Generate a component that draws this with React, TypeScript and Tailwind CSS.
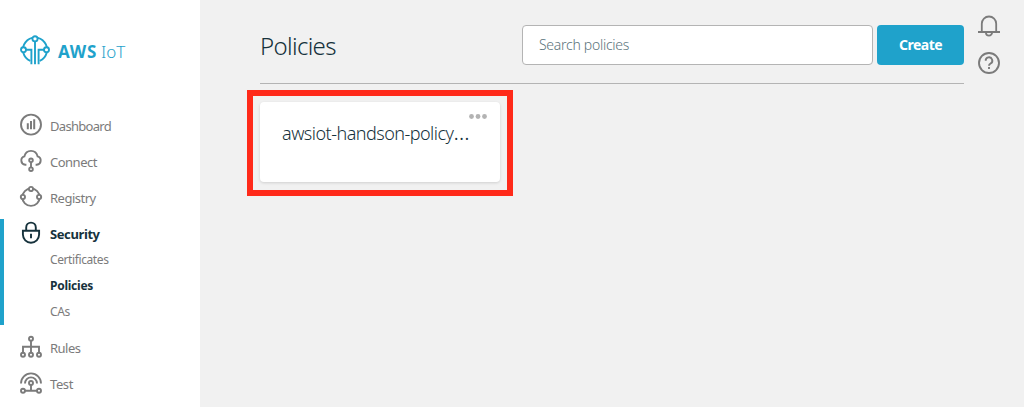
import type { ReactNode } from "react";

function Icon({ children, className = "" }: { children: ReactNode; className?: string }) {
  return (
    <svg
      viewBox="0 0 24 24"
      className={`h-6 w-6 shrink-0 ${className}`}
      fill="none"
      stroke="currentColor"
      strokeWidth="1.9"
    >
      {children}
    </svg>
  );
}

const DashboardIcon = () => (
  <Icon>
    <circle cx="12" cy="11.6" r="10" />
    <path d="M8.8 10.2v6.1M12 8v8.3M15.2 6.2v10.1" strokeWidth="2" />
  </Icon>
);

const ConnectIcon = () => (
  <Icon>
    <path d="M7.4 15.8H6.2A4.3 4.3 0 0 1 5.4 7.4C6.2 4 8.8 1.9 12 1.9s5.8 2.1 6.6 5.5a4.3 4.3 0 0 1-.8 8.4h-1.2" />
    <circle cx="12" cy="11.3" r="1.8" />
    <circle cx="12" cy="20.2" r="1.8" />
    <path d="M12 13.1v5.3" />
  </Icon>
);

const RegistryIcon = () => (
  <Icon>
    <circle cx="12" cy="12.2" r="8.7" />
    <circle cx="12" cy="4" r="2.1" fill="white" />
    <circle cx="3.9" cy="12" r="2.1" fill="white" />
    <circle cx="20.1" cy="12" r="2.1" fill="white" />
  </Icon>
);

const SecurityIcon = () => (
  <Icon>
    <path d="M3.9 9.7h16.2v3.9a8.1 8.1 0 0 1-16.2 0Z" />
    <path d="M7.2 9.6V6.4a4.8 4.8 0 0 1 9.6 0v3.2M12 12.8v4.4" />
  </Icon>
);

const RulesIcon = () => (
  <Icon>
    <circle cx="12" cy="3.7" r="2" />
    <circle cx="4" cy="19.7" r="2" />
    <circle cx="12" cy="19.7" r="2" />
    <circle cx="20" cy="19.7" r="2" />
    <path d="M12 5.7v12M4 17.7v-5.9h16v5.9" />
  </Icon>
);

const TestIcon = () => (
  <Icon>
    <path d="M2 12.4a10 10 0 0 1 20 0M6 12.4a6 6 0 0 1 12 0" />
    <circle cx="12" cy="12" r="2" />
    <circle cx="4" cy="19.8" r="2" />
    <circle cx="20" cy="19.8" r="2" />
    <path d="M12 14v5.8M6 19.8h12" />
  </Icon>
);

const Logo = () => (
  <svg viewBox="0 0 30 30" className="h-[30px] w-[30px] shrink-0" fill="none" stroke="currentColor" strokeWidth="1.9">
    <path d="M10.3 25.9a12.1 12.1 0 1 1 9.4 0" />
    <path d="M15 6.3v23M5.7 14.8h5.7v14.5M24.3 14.8h-5.7v14.5" />
    <circle cx="15" cy="3.8" r="2.6" fill="white" />
    <circle cx="3.5" cy="14.8" r="2.5" fill="white" />
    <circle cx="26.5" cy="14.8" r="2.5" fill="white" />
  </svg>
);

function NavItem({ icon, label, text, active }: { icon: ReactNode; label: string; text: string; active?: boolean }) {
  return (
    <a
      className={`flex h-9 items-center gap-[7px] pl-[15px] text-[13px] ${text} ${
        active ? "font-bold text-[#16323c]" : "text-[#7b7b7b]"
      }`}
    >
      {icon}
      <span className="pt-[3px] whitespace-nowrap">{label}</span>
    </a>
  );
}

export default function App() {
  return (
    <div className="flex h-[407px] w-[1024px] overflow-hidden bg-[#f1f1f1] font-['Noto_Sans','Open_Sans',sans-serif] text-[#16323c]">
      <aside className="flex h-full w-[200px] shrink-0 flex-col bg-white">
        <div className="flex h-[107px] gap-2 pt-[35px] pl-5 text-[#1fa2cb]">
          <Logo />
          <div className="flex h-[33px] items-center gap-[4px] text-[17px]">
            <span className="font-bold tracking-[0.7px]">AWS</span>
            <span className="font-light tracking-[0px]">IoT</span>
          </div>
        </div>
        <nav className="flex flex-col">
          <div className="flex flex-col border-l-4 border-transparent">
            <NavItem icon={<DashboardIcon />} label="Dashboard" text="tracking-[-0.7px]" />
            <NavItem icon={<ConnectIcon />} label="Connect" text="tracking-[-0.5px]" />
            <NavItem icon={<RegistryIcon />} label="Registry" text="tracking-[-0.5px]" />
          </div>
          <div className="mt-1 flex h-[106px] flex-col border-l-4 border-[#1fa2cb]">
            <div className="-mt-1">
              <NavItem icon={<SecurityIcon />} label="Security" text="tracking-[-0.4px]" active />
            </div>
            <div className="-mt-[4px] flex flex-col pl-[46px] text-[12px] leading-[26px] text-[#7b7b7b]">
              <a className="tracking-[-0.4px]">Certificates</a>
              <a className="font-bold tracking-[-0.25px] text-[#16323c]">Policies</a>
              <a className="tracking-[-0.4px]">CAs</a>
            </div>
          </div>
          <div className="mt-1 flex flex-col border-l-4 border-transparent">
            <NavItem icon={<RulesIcon />} label="Rules" text="tracking-[-0.5px]" />
            <NavItem icon={<TestIcon />} label="Test" text="tracking-[-0.4px]" />
          </div>
        </nav>
      </aside>

      <main className="ml-[60px] w-[704px] shrink-0">
        <header className="flex h-[84px] border-b border-[#b4b4b4] pt-[25px]">
          <h1 className="w-[262px] text-[24px] leading-[42px] font-light tracking-[-0.65px]">Policies</h1>
          <input
            placeholder="Search policies"
            className="h-10 w-[351px] rounded-[4px] border border-[#b4b4b4] bg-white px-4 pb-px text-[14px] font-light tracking-[-0.27px] outline-none placeholder:text-[#5b747c]"
          />
          <button className="ml-[4px] h-10 w-[87px] rounded-[4px] bg-[#1fa2cb] pb-px text-[14px] font-bold tracking-[-0.5px] text-white">
            Create
          </button>
        </header>
        <div className="mt-[6px] -ml-[13px] flex h-[106px] w-[266px] border-[6px] border-[#ff2a1a] pt-[6px] pl-[7px]">
          <article className="relative h-20 w-60 rounded-[4px] bg-white pt-[18px] pl-[22px] shadow-[0_1px_3px_rgba(0,0,0,0.14)]">
            <h2 className="text-[18px] leading-[26px] font-light tracking-[-0.52px] whitespace-nowrap">
              awsiot-handson-policy<span className="text-[22px] leading-none">…</span>
            </h2>
            <svg viewBox="0 0 18 5" className="absolute top-[12px] right-[13px] h-[5px] w-[18px]" fill="#b3b3b3">
              <circle cx="2.5" cy="2.5" r="2.4" />
              <circle cx="9" cy="2.5" r="2.4" />
              <circle cx="15.5" cy="2.5" r="2.4" />
            </svg>
          </article>
        </div>
      </main>

      <div className="flex flex-col gap-[13px] pt-[14px] pl-[13px] text-[#7b7b7b]">
        <Icon>
          <path d="M1 18h22M4.8 17.8V9.7a7.2 7.2 0 0 1 14.4 0v8.1M8.9 18.5a3.1 3.1 0 0 0 6.2 0" strokeWidth="1.8" />
        </Icon>
        <Icon>
          <circle cx="12" cy="12" r="10" />
          <path d="M8.7 9.8a3.3 3.3 0 1 1 4.9 2.7c-1.1.6-1.6 1-1.6 2.3M12 16.1v2" />
        </Icon>
      </div>
    </div>
  );
}
